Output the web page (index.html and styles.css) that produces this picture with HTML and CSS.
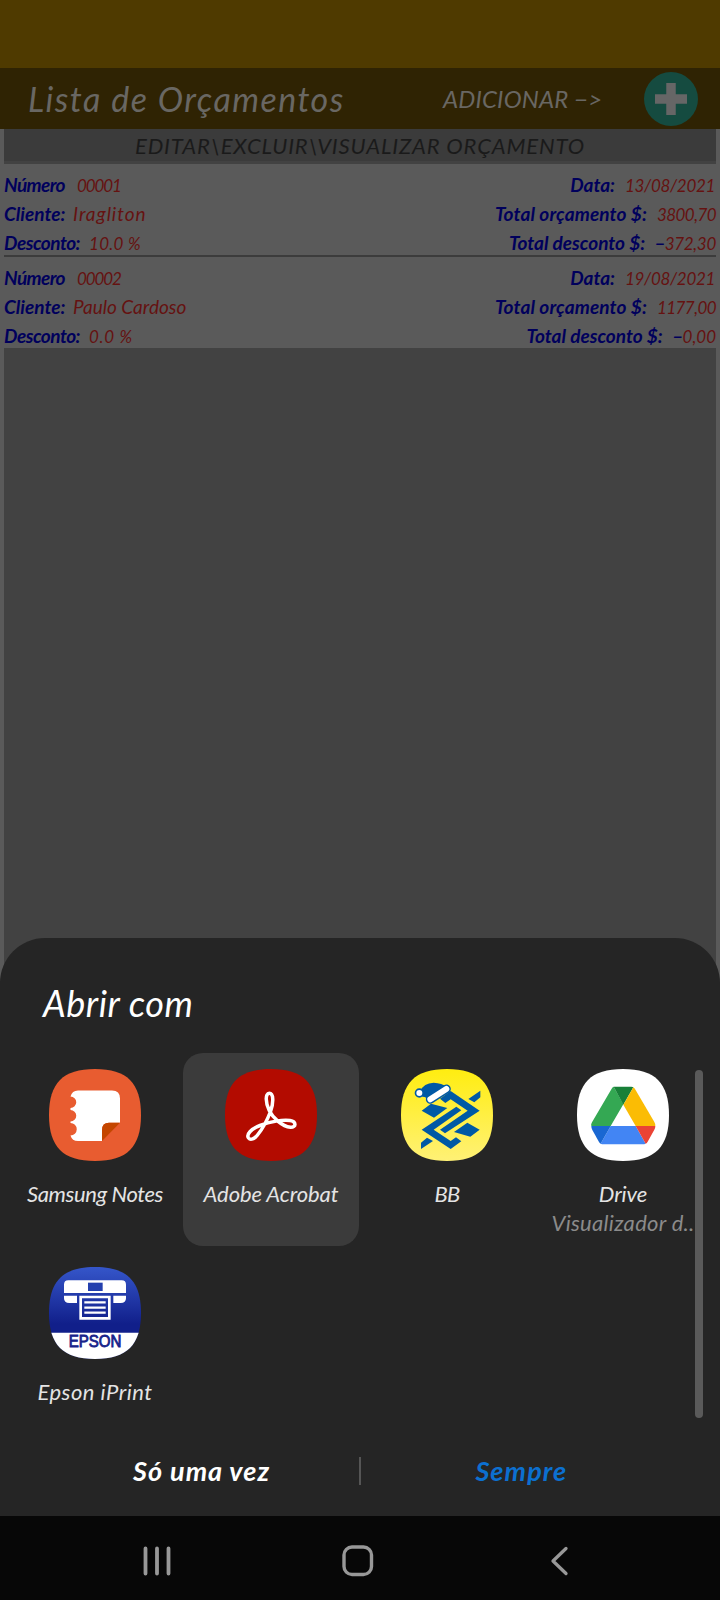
FILE: index.html
```html
<!DOCTYPE html>
<html lang="pt-BR">
<head>
<meta charset="utf-8">
<title>Lista de Orçamentos</title>
<link rel="stylesheet" href="styles.css">
</head>
<body>
<div class="screen">
  <div class="status"></div>
  <header class="header">
    <h1 class="title">Lista de Orçamentos</h1>
    <span class="add-label">ADICIONAR −&gt;</span>
    <svg class="add" viewBox="0 0 54 54"><circle cx="27" cy="27" r="27" fill="#154b40"/><path d="M27 11v32M11 27h32" stroke="#666" stroke-width="9.5"/></svg>
  </header>
  <main class="content">
    <h2 class="band">EDITAR\EXCLUIR\VISUALIZAR ORÇAMENTO</h2>
    <section class="row">
      <p class="line"><b class="k-num">Número</b><span class="v-code">00001</span><b class="end k-date">Data:</b><span class="v-date">13/08/2021</span></p>
      <p class="line"><b class="k-client">Cliente:</b><span class="v-name wide">Iragliton</span><b class="end k-total">Total orçamento $:</b><span class="v-total">3800,70</span></p>
      <p class="line"><b class="k-disc">Desconto:</b><span class="v-pct">10.0 %</span><b class="end">Total desconto $:</b><span class="v-disc"><b>−</b>372,30</span></p>
    </section>
    <section class="row">
      <p class="line"><b class="k-num">Número</b><span class="v-code">00002</span><b class="end k-date">Data:</b><span class="v-date">19/08/2021</span></p>
      <p class="line"><b class="k-client">Cliente:</b><span class="v-name">Paulo Cardoso</span><b class="end k-total">Total orçamento $:</b><span class="v-total">1177,00</span></p>
      <p class="line"><b class="k-disc">Desconto:</b><span class="v-pct zero">0.0 %</span><b class="end">Total desconto $:</b><span class="v-disc zero"><b>−</b>0,00</span></p>
    </section>
  </main>

  <section class="sheet">
    <h2 class="sheet-title">Abrir com</h2>
    <div class="apps">
      <div class="app">
        <svg class="icon" viewBox="0 0 92 92">
          <path d="M46 0C78 0 92 14 92 46S78 92 46 92 0 78 0 46 14 0 46 0Z" fill="#e85c30"/>
          <path d="M29 21.500H63Q71 21.500 71 29.500V53.700H60Q53 53.700 53 61V72H29Q23 72 21.500 66.500A5.600 5.600 0 0 0 21.500 54V52.500A5.600 5.600 0 0 0 21.500 41V39A5.600 5.600 0 0 0 21.500 27.500Q23 21.500 29 21.500Z" fill="#fff"/>
          <path d="M71 53.700 53 72V61Q53 53.700 60 53.700Z" fill="#c44600"/>
        </svg>
        <span class="name n-notes">Samsung Notes</span>
      </div>
      <div class="app selected">
        <svg class="icon" viewBox="0 0 92 92">
          <path d="M46 0C78 0 92 14 92 46S78 92 46 92 0 78 0 46 14 0 46 0Z" fill="#b30b00"/>
          <path d="M23.500 69C21 65.500 26 60 35 56.500C45 52.500 58 50.500 65 51.500C71.500 52.500 71.500 58.500 65.500 58.300C57 57.500 48 49 44.200 41.500C40.500 34 40 24.300 44.300 24.300C48.800 24.300 48.500 34 45.700 42C42.500 50.500 37.500 60 32.500 66C29.500 70 25.500 71.500 23.500 69Z" fill="none" stroke="#fff" stroke-width="3.500" stroke-linejoin="round"/>
        </svg>
        <span class="name">Adobe Acrobat</span>
      </div>
      <div class="app">
        <svg class="icon" viewBox="123 445 276 276">
          <defs><linearGradient id="bb" x1="0" y1="0" x2="0" y2="1"><stop offset="0" stop-color="#ffed10"/><stop offset="1" stop-color="#fff176"/></linearGradient></defs>
          <path d="M261 445C357 445 399 487 399 583S357 721 261 721 123 679 123 583 165 445 261 445Z" fill="url(#bb)"/>
          <g fill="#0059a5">
            <path d="M185 570 213 549 262 562 222 591ZM240 534 272 511 359 570 255 638 240 627 323 570 272 536 256 547ZM325 535 361 510V530L343 545Z"/>
            <path d="M359 627 331 648 282 634 322 606ZM304 662 272 685 185 627 289 558 304 569 221 627 272 661 288 650ZM219 661 183 685V666L201 651Z"/>
            <path d="M181 511Q191 487 221 486 246 487 260 498L210 542Q201 528 187 528Z"/>
          </g>
          <circle cx="178" cy="517" r="11.500" fill="#fff" stroke="#0059a5" stroke-width="5"/>
          <path d="m211 536 48-31" stroke="#0059a5" stroke-width="27" stroke-linecap="round"/>
          <path d="m211 536 48-31" stroke="#fff" stroke-width="18" stroke-linecap="round"/>
        </svg>
        <span class="name n-bb">BB</span>
      </div>
      <div class="app">
        <svg class="icon" viewBox="651 445 276 276">
          <path d="M789 445C885 445 927 487 927 583S885 721 789 721 651 679 651 583 693 445 789 445Z" fill="#fff"/>
          <path d="M761 498 790 551 752 616H694Q692 611 696 605L755 504Q757 499 761 498Z" fill="#34a853"/>
          <path d="M761 498H814Q818 498 820 500L790 552Z" fill="#188038"/>
          <path d="M820 500Q823 502 825 505L883 604Q887 611 886 616H827L790 552Z" fill="#fbbc04"/>
          <path d="M752 616H827L857 669Q853 671 848 671H731Q726 671 722 669Z" fill="#4285f4"/>
          <path d="M694 616H752L722 669Q719 667 717 664L697 628Q694 622 694 616Z" fill="#1967d2"/>
          <path d="M827 616H886Q886 622 883 627L863 663Q861 667 857 669Z" fill="#ea4335"/>
        </svg>
        <span class="name">Drive</span>
        <small class="sub">Visualizador d..</small>
      </div>
      <div class="app">
        <svg class="icon" viewBox="147 80 276 276">
          <defs>
            <linearGradient id="ep" x1="0" y1="0" x2="0" y2="1"><stop offset="0" stop-color="#3556ca"/><stop offset=".62" stop-color="#111f8a"/></linearGradient>
            <clipPath id="sq"><path d="M285 80C381 80 423 122 423 218S381 356 285 356 147 314 147 218 189 80 285 80Z"/></clipPath>
          </defs>
          <g clip-path="url(#sq)">
            <path d="M147 80H423V356H147Z" fill="url(#ep)"/>
            <path d="M147 277H423V356H147Z" fill="#fff"/>
          </g>
          <path d="M205 120H365Q378 120 378 133V158H192V133Q192 120 205 120ZM192 166H231V188H208Q192 188 192 174ZM340 166H378V174Q378 188 362 188H340Z" fill="#fff"/>
          <path d="M264 127H308V152H264Z" fill="#2440ae"/>
          <path d="M242 170H328V234H242Z" fill="none" stroke="#fff" stroke-width="8"/>
          <path d="M253 186H317M253 202H317M253 217H317" stroke="#fff" stroke-width="7"/>
          <text class="brand" x="206" y="320" textLength="158" lengthAdjust="spacingAndGlyphs">EPSON</text>
        </svg>
        <span class="name n-epson">Epson iPrint</span>
      </div>
    </div>
    <div class="scrollbar"></div>
    <div class="actions">
      <span class="once">Só uma vez</span>
      <span class="divider"></span>
      <span class="always">Sempre</span>
    </div>
  </section>

  <nav class="nav">
    <svg width="28" height="30" viewBox="0 0 28 30"><path d="M2.500 2.500v25M14 2.500v25M25.500 2.500v25" stroke-width="3.800"/></svg>
    <svg class="home" width="32" height="32" viewBox="0 0 32 32"><rect x="2" y="2" width="27.500" height="27.500" rx="8" stroke-width="3.400"/></svg>
    <svg width="20" height="30" viewBox="0 0 20 30"><path d="M17 2.500 4 15l13 12.500" stroke-width="3.300"/></svg>
  </nav>
</div>
</body>
</html>
```
FILE: styles.css
```css
*{box-sizing:border-box;margin:0;padding:0}
body{background:#5a5a5a;font-family:Lato,"Open Sans",sans-serif;font-style:italic;font-weight:400;white-space:nowrap}
.screen{width:720px;height:1600px;position:relative;overflow:hidden;background:#5a5a5a;display:flex;flex-direction:column}
.status{height:68px;background:#4f3a00}
.header{height:61px;padding:0 22px 0 28px;background:#2f2303;display:flex;align-items:center;color:#696763}
.title{width:415px;font-size:34px;font-weight:400;letter-spacing:1.45px}
.add-label{font-size:24px;line-height:30px;letter-spacing:.15px;flex:1}
.add{width:54px;height:54px}

.content{flex:1;margin:0 4px;background:#424242}
.band{height:32px;line-height:33px;margin-bottom:3px;background:#3b3b3b;color:#1a1a1a;text-align:center;font-size:22px;font-weight:400;letter-spacing:.84px}
.row{height:91px;padding-top:6px;background:#5a5a5a}
.row + .row{height:93px;border-top:2px solid #3c3c3c}
.line{display:flex;align-items:baseline;height:29px;font-size:19px;line-height:29px;color:#651211}
.line b{font-weight:700;color:#00005c}
.line .end{margin-left:auto}
.k-num{width:73px;letter-spacing:-.59px}
.k-client{width:69px}
.k-disc{width:85px;letter-spacing:-.5px}
.k-total{letter-spacing:.13px}
.v-code{font-size:17px;letter-spacing:-1.1px}
.v-date{width:91px;margin-left:10px;font-size:17px;letter-spacing:-.3px}
.v-total{margin-left:10px;font-size:17px;letter-spacing:-.57px}
.v-disc{margin-left:10px;font-size:17px;letter-spacing:-.3px}
.v-disc.zero{letter-spacing:0}
.v-pct{font-size:17px;letter-spacing:.3px}
.v-pct.zero{letter-spacing:.7px}
.v-name.wide{letter-spacing:.95px}

.sheet{position:absolute;left:0;top:938px;width:720px;height:578px;border-radius:45px 45px 0 0;background:#252525;color:#fff}
.sheet-title{height:115px;padding:43px 43px 0;font-size:36px;line-height:44px;font-weight:400;letter-spacing:.55px}
.apps{width:704px;margin-left:7px;display:grid;grid-template-columns:repeat(4,176px);grid-template-rows:193px 193px;row-gap:5px}
.app{display:flex;flex-direction:column;align-items:center;padding-top:16px;border-radius:20px;font-size:22px;line-height:30px}
.app.selected{background:#3b3b3b}
.icon{width:92px;height:92px;margin-bottom:18px}
.name{color:#e4e4e4;letter-spacing:-.1px}
.n-notes{letter-spacing:-.38px}
.n-bb{letter-spacing:-.75px}
.n-epson{letter-spacing:.48px}
.sub{font-size:22px;line-height:28px;letter-spacing:.3px;color:#8b8b8b}
.brand{font:normal 400 47px "Liberation Sans",Arial,sans-serif;fill:#17238a;stroke:#17238a;stroke-width:2.5px}
.scrollbar{position:absolute;right:17px;top:132px;width:8px;height:348px;border-radius:4px;background:#5a5a5a}
.actions{display:grid;grid-template-columns:1fr 1.5px 1fr;justify-items:center;align-items:center;padding:9px 0 0;font-size:27px;line-height:36px;font-weight:700}
.divider{width:1.5px;height:28px;background:#555}
.once{padding-left:44px;letter-spacing:1px}
.always{padding-right:38px;color:#0c70d0;letter-spacing:1.1px}

.nav{position:absolute;left:0;bottom:0;width:720px;height:84px;padding:5px 151px 0 143px;display:flex;align-items:center;justify-content:space-between;background:#070707}
.nav svg{fill:none;stroke:#989898;stroke-linecap:round;stroke-linejoin:round}
.nav .home{margin-right:4px}
```
